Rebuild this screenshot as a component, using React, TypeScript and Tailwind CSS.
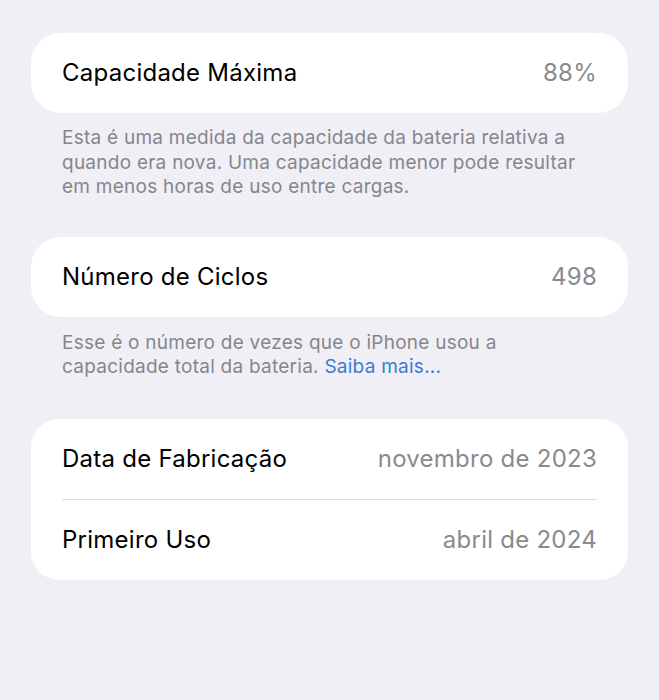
import React from "react";

const font = { fontFamily: "Inter, 'Noto Sans', 'Liberation Sans', sans-serif" };

function Row({ label, value }: { label: string; value: string }) {
  return (
    <div className="flex items-center justify-between h-[80px]">
      <span className="text-[24px] text-black tracking-[0.25px]">{label}</span>
      <span className="text-[24px] text-[#8a8a8e] tracking-[0.25px]">{value}</span>
    </div>
  );
}

export default function App() {
  return (
    <div className="min-h-[700px] w-full bg-[#f0eff5] px-[31px] pt-[33px]" style={font}>
      <div className="rounded-[30px] bg-white px-[31px]">
        <Row label="Capacidade Máxima" value="88%" />
      </div>
      <p className="px-[31px] pt-[13px] text-[19px] leading-[24.5px] tracking-[0.25px] text-[#86868b]">
        Esta é uma medida da capacidade da bateria relativa a quando era nova. Uma capacidade menor pode resultar em menos horas de uso entre cargas.
      </p>

      <div className="mt-[37px] rounded-[30px] bg-white px-[31px]">
        <Row label="Número de Ciclos" value="498" />
      </div>
      <p className="px-[31px] pt-[14px] text-[19px] leading-[24.5px] tracking-[0.25px] text-[#86868b]">
        Esse é o número de vezes que o iPhone usou a capacidade total da bateria. <span className="text-[#3a7bd5]">Saiba mais...</span>
      </p>

      <div className="mt-[39px] rounded-[28px] bg-white px-[31px]">
        <Row label="Data de Fabricação" value="novembro de 2023" />
        <div className="h-px bg-[#dcdce0]" />
        <Row label="Primeiro Uso" value="abril de 2024" />
      </div>
    </div>
  );
}
